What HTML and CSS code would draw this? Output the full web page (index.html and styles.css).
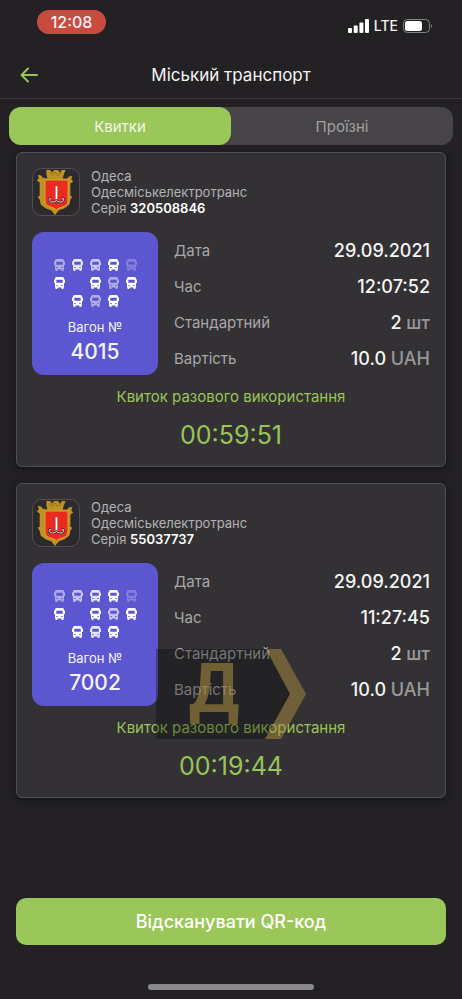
FILE: index.html
```html
<!DOCTYPE html>
<html lang="uk">
<head>
<meta charset="utf-8">
<meta name="viewport" content="width=device-width, initial-scale=1">
<title>Міський транспорт</title>
<link rel="stylesheet" href="styles.css">
</head>
<body>
<svg class="defs" aria-hidden="true">
  <symbol id="bus" viewBox="0 0 11 12">
    <path fill-rule="evenodd" d="M2.500 0h6q1.500 0 1.500 1.500V2.500h1V6h-1v4.500h-.5v1q0 .5-.5.5H8q-.5 0-.5-.5v-1h-4v1q0 .5-.5.5H2q-.5 0-.5-.5v-1H1V6H0V2.500h1V1.500Q1 0 2.500 0zM2.300 2.800v2.900h6.400V2.800zM2.300 8v1h1.400V8zM7.300 8v1h1.400V8z"/>
  </symbol>
  <symbol id="arms" viewBox="0 0 48 48">
    <path fill="#bd9424" d="M14 1h4l2 3 2-3h4l2 3 2-3h4l-2 5-1 4 5 0 1-2 4-1-1 4 2 2-3 2v13l2 1-2 3-1 5-5 4-6 2-4 5-4-5-6-2-5-4-1-5-2-3 2-1V14l-3-2 2-2-1-4 4 1 1 2 5 1-1-4z"/>
    <path fill="none" stroke="#8f7020" stroke-width="1" d="M17 3l3 4 3-4 3 4 4-4"/>
    <path fill="#ea2b22" stroke="#d9a72e" stroke-width="1" d="M12.500 11.500h24V33q0 5-4 6-5 1-8 3.500Q21.500 40 16.500 39q-4-1-4-6z"/>
    <path fill="none" stroke="#8a2620" stroke-width="3" d="M24.500 19v13"/>
    <path fill="none" stroke="#fff" stroke-width="2" d="M24.500 18v14"/>
    <path fill="none" stroke="#5b2424" stroke-width="2.500" d="M19 31q-3-1-2 2 2 3 7.500 0 5.500 3 7.500 0 1-3-2-2"/>
    <path fill="none" stroke="#ddd" stroke-width="1" d="M19 31q-3-1-2 2 2 3 7.500 0 5.500 3 7.500 0 1-3-2-2"/>
  </symbol>
</svg>
<div class="screen">
  <div class="status">
    <span class="clock">12:08</span>
    <div class="signals">
      <svg class="bars" viewBox="0 0 21 14" aria-hidden="true"><rect x="0" y="9" width="4" height="5" rx="1"/><rect x="5.700" y="6.500" width="4" height="7.500" rx="1"/><rect x="11.400" y="3.500" width="4" height="10.500" rx="1"/><rect x="17" y="0" width="4" height="14" rx="1"/></svg>
      <span>LTE</span>
      <svg class="battery" viewBox="0 0 30 14" aria-hidden="true"><rect x=".5" y=".5" width="26" height="13" rx="4" fill="none" stroke="#858386"/><rect x="2" y="2" width="17" height="10" rx="2.500" fill="#fff"/><path d="M28 5q2 2 0 4z" fill="#858386"/></svg>
    </div>
  </div>
  <header class="header">
    <button class="back" type="button" aria-label="Назад"><svg viewBox="0 0 18 16" aria-hidden="true"><path d="M8 1.500L1.500 8 8 14.500M1.500 8H17"/></svg></button>
    <h1>Міський транспорт</h1>
  </header>
  <nav class="tabs">
    <button class="tab active" type="button">Квитки</button>
    <button class="tab" type="button">Проїзні</button>
  </nav>
  <main class="tickets">
    <article class="ticket">
      <div class="carrier">
        <svg class="arms" aria-hidden="true"><use href="#arms"/></svg>
        <p>Одеса<br>Одесміськелектротранс<br>Серія <strong>320508846</strong></p>
      </div>
      <div class="details">
        <div class="wagon">
          <div class="fleet">
            <svg class="b2"><use href="#bus"/></svg><svg class="b4"><use href="#bus"/></svg><svg class="b3"><use href="#bus"/></svg><svg><use href="#bus"/></svg><svg class="b1"><use href="#bus"/></svg>
            <svg><use href="#bus"/></svg><i></i><svg><use href="#bus"/></svg><svg class="b2"><use href="#bus"/></svg><svg><use href="#bus"/></svg>
            <i></i><svg><use href="#bus"/></svg><svg class="b2"><use href="#bus"/></svg><svg><use href="#bus"/></svg><i></i>
          </div>
          <span class="wagon-label">Вагон №</span>
          <span class="wagon-number">4015</span>
        </div>
        <dl class="facts">
          <div><dt>Дата</dt><dd>29.09.2021</dd></div>
          <div><dt>Час</dt><dd>12:07:52</dd></div>
          <div><dt>Стандартний</dt><dd>2 <span>шт</span></dd></div>
          <div><dt>Вартість</dt><dd>10.0 <span>UAH</span></dd></div>
        </dl>
      </div>
      <p class="note">Квиток разового використання</p>
      <p class="timer">00:59:51</p>
    </article>
    <article class="ticket">
      <div class="carrier">
        <svg class="arms" aria-hidden="true"><use href="#arms"/></svg>
        <p>Одеса<br>Одесміськелектротранс<br>Серія <strong>55037737</strong></p>
      </div>
      <div class="details">
        <div class="wagon">
          <div class="fleet">
            <svg class="b2"><use href="#bus"/></svg><svg class="b3"><use href="#bus"/></svg><svg class="b4"><use href="#bus"/></svg><svg><use href="#bus"/></svg><svg class="b1"><use href="#bus"/></svg>
            <svg><use href="#bus"/></svg><i></i><svg><use href="#bus"/></svg><svg class="b3"><use href="#bus"/></svg><svg><use href="#bus"/></svg>
            <i></i><svg><use href="#bus"/></svg><svg class="b4"><use href="#bus"/></svg><svg><use href="#bus"/></svg><i></i>
          </div>
          <span class="wagon-label">Вагон №</span>
          <span class="wagon-number">7002</span>
        </div>
        <dl class="facts">
          <div><dt>Дата</dt><dd>29.09.2021</dd></div>
          <div><dt>Час</dt><dd>11:27:45</dd></div>
          <div><dt>Стандартний</dt><dd>2 <span>шт</span></dd></div>
          <div><dt>Вартість</dt><dd>10.0 <span>UAH</span></dd></div>
        </dl>
      </div>
      <p class="note">Квиток разового використання</p>
      <p class="timer">00:19:44</p>
      <svg class="watermark" viewBox="0 0 150 90">
        <path fill="#000" fill-opacity=".3" d="M0 0h110l24 45-25 45H0z"/>
        <path fill="#ae9040" fill-opacity=".5" d="M110 0h15l25 45-25 45h-16l25-45z"/>
        <text x="58" y="63" text-anchor="middle">Д</text>
      </svg>
    </article>
  </main>
  <footer class="footer">
    <button class="scan" type="button">Відсканувати QR-код</button>
    <div class="home"></div>
  </footer>
</div>
</body>
</html>
```
FILE: styles.css
```css
* { box-sizing: border-box; }
body {
  margin: 0;
  background: #232124;
  color: #f5f4f5;
  font-family: Inter, "Noto Sans", sans-serif;
}
h1, p, dl, dd { margin: 0; }
button { border: 0; padding: 0; font: inherit; color: inherit; background: none; }
.defs { position: absolute; width: 0; height: 0; }
.screen { display: flex; flex-direction: column; min-height: 100vh; }

.status {
  display: flex;
  justify-content: space-between;
  align-items: flex-start;
  height: 51px;
  padding: 10px 29px 0 37px;
}
.clock {
  width: 69px;
  border-radius: 12px;
  background: #c94b40;
  font-size: 16px;
  font-weight: 500;
  line-height: 24px;
  text-align: center;
}
.signals {
  display: flex;
  align-items: center;
  gap: 5px;
  padding-top: 6px;
  font-size: 14px;
  font-weight: 500;
  line-height: 20px;
}
.bars { width: 21px; height: 14px; fill: #fff; }
.battery { width: 30px; height: 14px; }

.header {
  display: grid;
  grid-template-columns: 42px 1fr 42px;
  align-items: center;
  height: 48px;
  border-bottom: 1px solid #39373a;
}
.back { height: 40px; padding-left: 16px; }
.back svg { display: block; width: 26px; height: 16px; fill: none; stroke: #98c458; stroke-width: 2; stroke-linecap: round; stroke-linejoin: round; }
h1 { font-size: 17px; font-weight: 400; line-height: 24px; text-align: center; }

.tabs {
  display: grid;
  grid-template-columns: 1fr 1fr;
  margin: 8px 9px 7px;
  border-radius: 12px;
  background: #464447;
}
.tab { height: 38px; border-radius: 12px; color: #a3a1a4; font-size: 15px; }
.tab.active { background: #9bc659; color: #f3f8e9; }

.tickets { display: flex; flex-direction: column; gap: 16px; padding: 0 16px; }
.ticket {
  position: relative;
  padding: 15px;
  border: 1px solid #505052;
  border-radius: 6px;
  background: #333134;
  box-shadow: 0 2px 6px #151316;
}
.carrier { display: flex; gap: 11px; }
.carrier p { color: #b4b2b5; font-size: 13px; line-height: 16px; }
.carrier strong { color: #fff; font-weight: 600; }
.arms { flex: none; width: 48px; height: 48px; border: 1px solid #504e51; border-radius: 10px; background: #2c2a2d; }

.details { display: flex; gap: 16px; margin-top: 16px; }
.wagon {
  display: flex;
  flex-direction: column;
  align-items: center;
  width: 126px;
  height: 143px;
  padding-top: 27px;
  border-radius: 12px;
  background: #5c56d1;
}
.fleet { display: grid; grid-template-columns: repeat(5, 11px); grid-auto-rows: 12px; gap: 6px 7px; }
.fleet svg { width: 11px; height: 12px; fill: #fff; }
.fleet .b1 { opacity: .25; }
.fleet .b2 { opacity: .5; }
.fleet .b3 { opacity: .65; }
.fleet .b4 { opacity: .85; }
.wagon-label { margin-top: 12px; font-size: 13px; line-height: 16px; }
.wagon-number { margin-top: 5px; font-size: 21px; font-weight: 500; line-height: 24px; }

.facts { flex: 1; }
.facts div { display: flex; justify-content: space-between; align-items: center; height: 36px; }
.facts dt { color: #a9a7aa; font-size: 15px; }
.facts dd { font-size: 18px; font-weight: 500; }
.facts span { color: #99979a; }

.note { margin-top: 11px; color: #98c458; font-size: 15px; line-height: 20px; text-align: center; }
.timer { margin-top: 12px; color: #98c458; font-size: 25px; line-height: 32px; text-align: center; }
.watermark { position: absolute; left: 139px; top: 165px; width: 150px; height: 90px; }
.watermark text { fill: #ae9040; fill-opacity: .56; font-family: Roboto, sans-serif; font-size: 68px; font-weight: 700; }

.footer { margin-top: auto; padding: 0 16px 9px; }
.scan {
  display: block;
  width: 100%;
  height: 47px;
  border-radius: 10px;
  background: #9bc659;
  color: #fff;
  font-size: 18px;
  font-weight: 500;
}
.home { width: 166px; height: 6px; margin: 39px auto 0; border-radius: 3px; background: #8b898c; }
```
